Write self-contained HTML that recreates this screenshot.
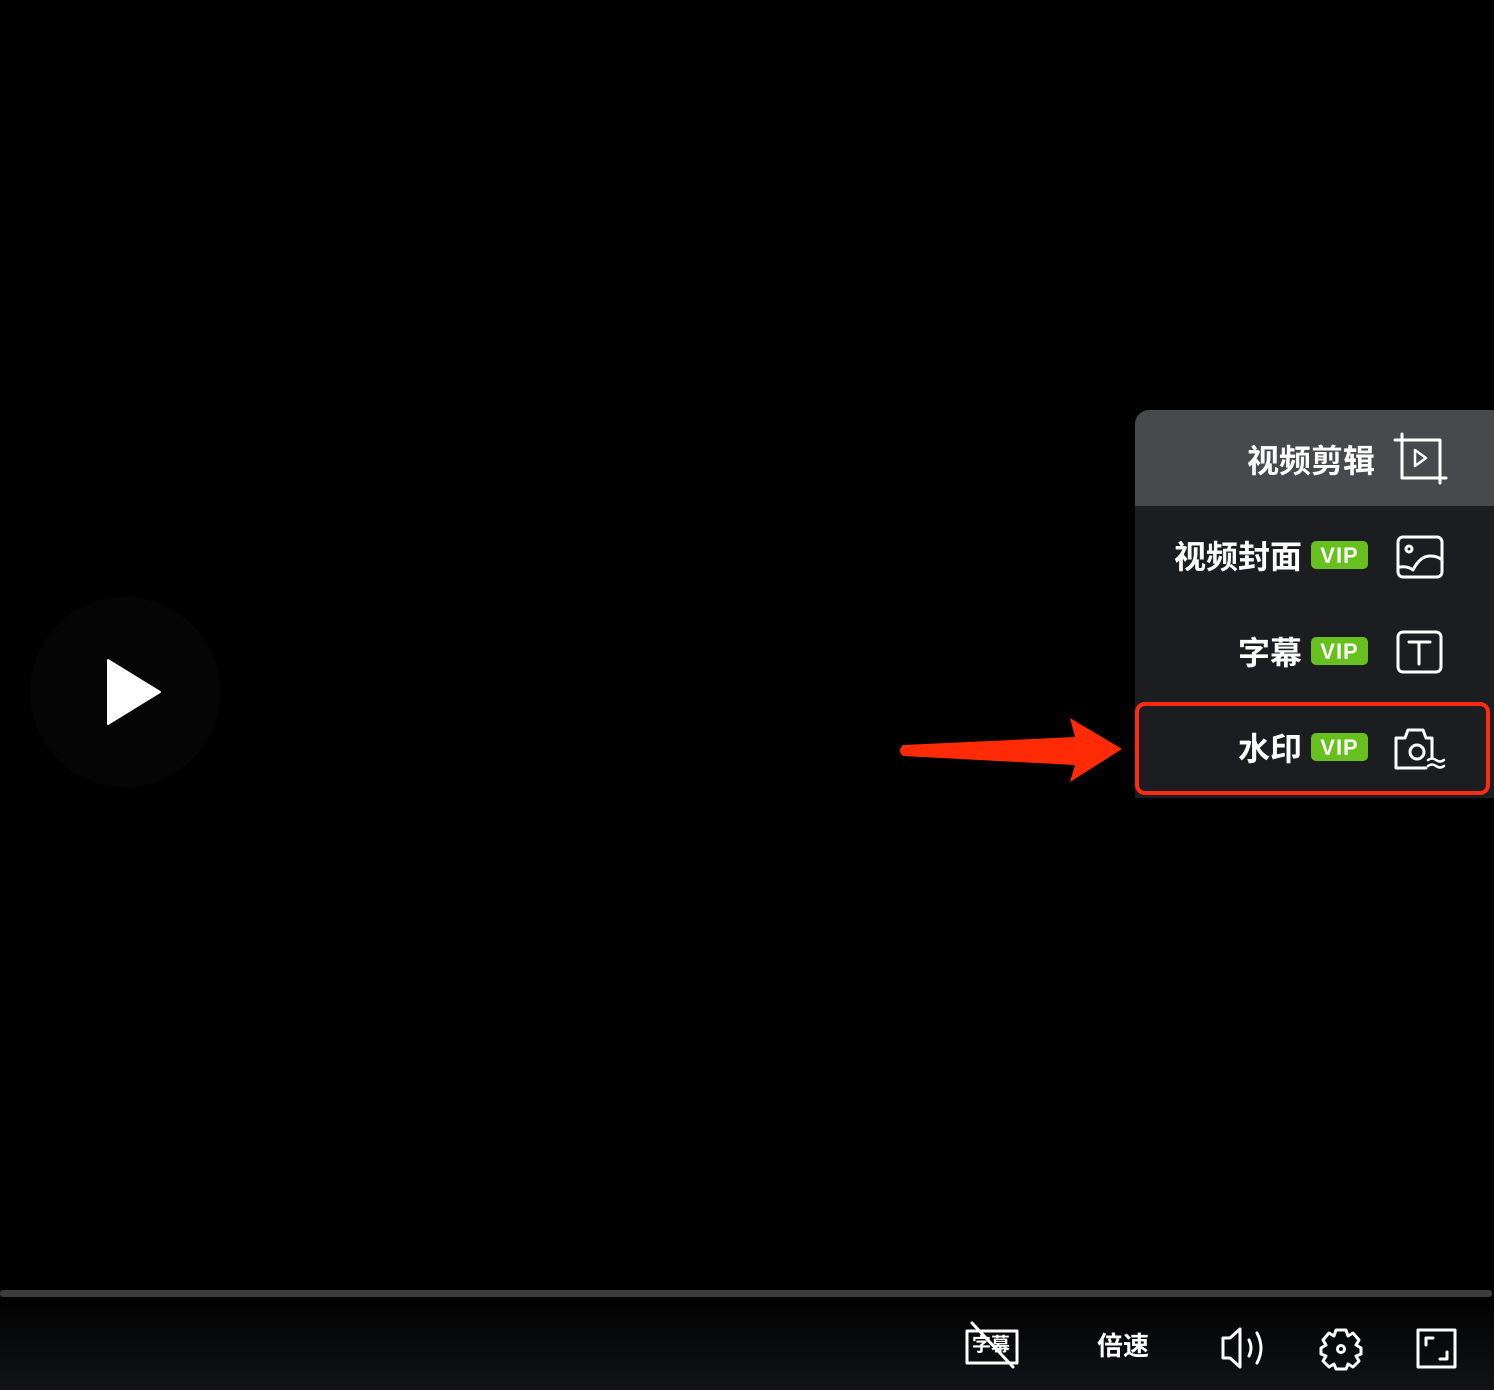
<!DOCTYPE html>
<html><head><meta charset="utf-8"><style>
*{margin:0;padding:0;box-sizing:border-box}
body{width:1494px;height:1390px;background:#000;position:relative;overflow:hidden;font-family:"Liberation Sans","Noto Sans CJK SC",sans-serif;color:#fff}
.a{position:absolute}
.menu{left:1135px;top:410px;width:359px;height:388px;background:#1b1d21;border-top-left-radius:14px;overflow:hidden}
.r1{left:0;top:0;width:359px;height:96px;background:#48494d}
.t{font-size:32px;font-weight:bold;line-height:40px;white-space:nowrap;text-align:right}
.vip{left:176px;width:57px;height:28px;background:#67c01e;border-radius:5px;font-size:22px;font-weight:bold;line-height:29px;text-align:center;letter-spacing:1px}
</style></head><body>
<div class="a" style="left:30px;top:597px;width:190px;height:190px;border-radius:50%;background:#050505"></div>
<div class="menu a">
 <div class="r1 a"></div>
 <div class="a t" style="right:119px;top:31px">视频剪辑</div>
 <div class="a t" style="right:192px;top:127px">视频封面</div>
 <div class="a vip" style="top:131px">VIP</div>
 <div class="a t" style="right:192px;top:223px">字幕</div>
 <div class="a vip" style="top:227px">VIP</div>
 <div class="a t" style="right:192px;top:319px">水印</div>
 <div class="a vip" style="top:323px">VIP</div>
</div>
<div class="a" style="left:1135px;top:702px;width:355px;height:93px;border:4px solid #ff2a12;border-radius:10px"></div>
<div class="a" style="left:0;top:1290px;width:1492px;height:7px;background:#3c3c3c;border-radius:3px"></div>
<div class="a" style="left:0;top:1297px;width:1494px;height:93px;background:linear-gradient(#000,#121316)"></div>
<div class="a" style="left:1097px;top:1328px;font-size:26px;line-height:36px;font-weight:bold">倍速</div>
<div class="a" style="left:972px;top:1334px;font-size:19px;line-height:24px;font-weight:bold">字幕</div>
<svg class="a" style="left:0;top:0" width="1494" height="1390" fill="none" stroke="#fff" stroke-width="3" stroke-linecap="round" stroke-linejoin="round">
 <path d="M108 660 L160 692 L108 724 Z" fill="#fff" stroke="#fff" stroke-width="2"/>
 <path d="M903 745 L1075 737 L1070 718 L1122 749 L1070 782 L1075 765 L903 756 Q897 751 903 745 Z" fill="#ff2a06" stroke="none"/>
 <path d="M1402 434V478H1446M1395 440H1440V483"/>
 <path d="M1415 450L1426 458L1415 466Z" stroke-width="2.5"/>
 <rect x="1398" y="537" width="44" height="40" rx="5"/>
 <circle cx="1409" cy="549" r="3"/>
 <path d="M1400 567Q1408 566 1413 570Q1420 556 1430 556Q1438 556 1442 560"/>
 <rect x="1398" y="632" width="43" height="40" rx="5"/>
 <path d="M1409 642H1430M1419 642V664"/>
 <path d="M1432 758V738H1426L1423 730H1408L1405 738H1396V768H1426"/>
 <circle cx="1417" cy="752" r="7"/>
 <path d="M1428 760q4-3 8 0t8 0M1428 766q4-3 8 0t8 0" stroke-width="2.5"/>
 <rect x="967" y="1331" width="50" height="32"/>
 <path d="M972 1323L1013 1367"/>
 <path d="M1223 1338H1230L1240 1329V1367L1230 1358H1223Z"/>
 <path d="M1249 1340Q1253 1348 1249 1356M1257 1333Q1265 1348 1257 1363"/>
 <path d="M1336 1330L1346 1330L1348 1336L1353 1333L1359 1340L1356 1345L1361 1348L1361 1354L1356 1356L1359 1361L1353 1367L1348 1364L1346 1369L1336 1369L1334 1364L1329 1367L1323 1361L1326 1356L1321 1354L1321 1348L1326 1345L1323 1340L1329 1333L1334 1336Z"/>
 <circle cx="1341" cy="1349" r="3.5"/>
 <rect x="1418" y="1330" width="37" height="37"/>
 <path d="M1426 1345V1338H1433M1447 1352V1359H1440"/>
</svg>
</body></html>
